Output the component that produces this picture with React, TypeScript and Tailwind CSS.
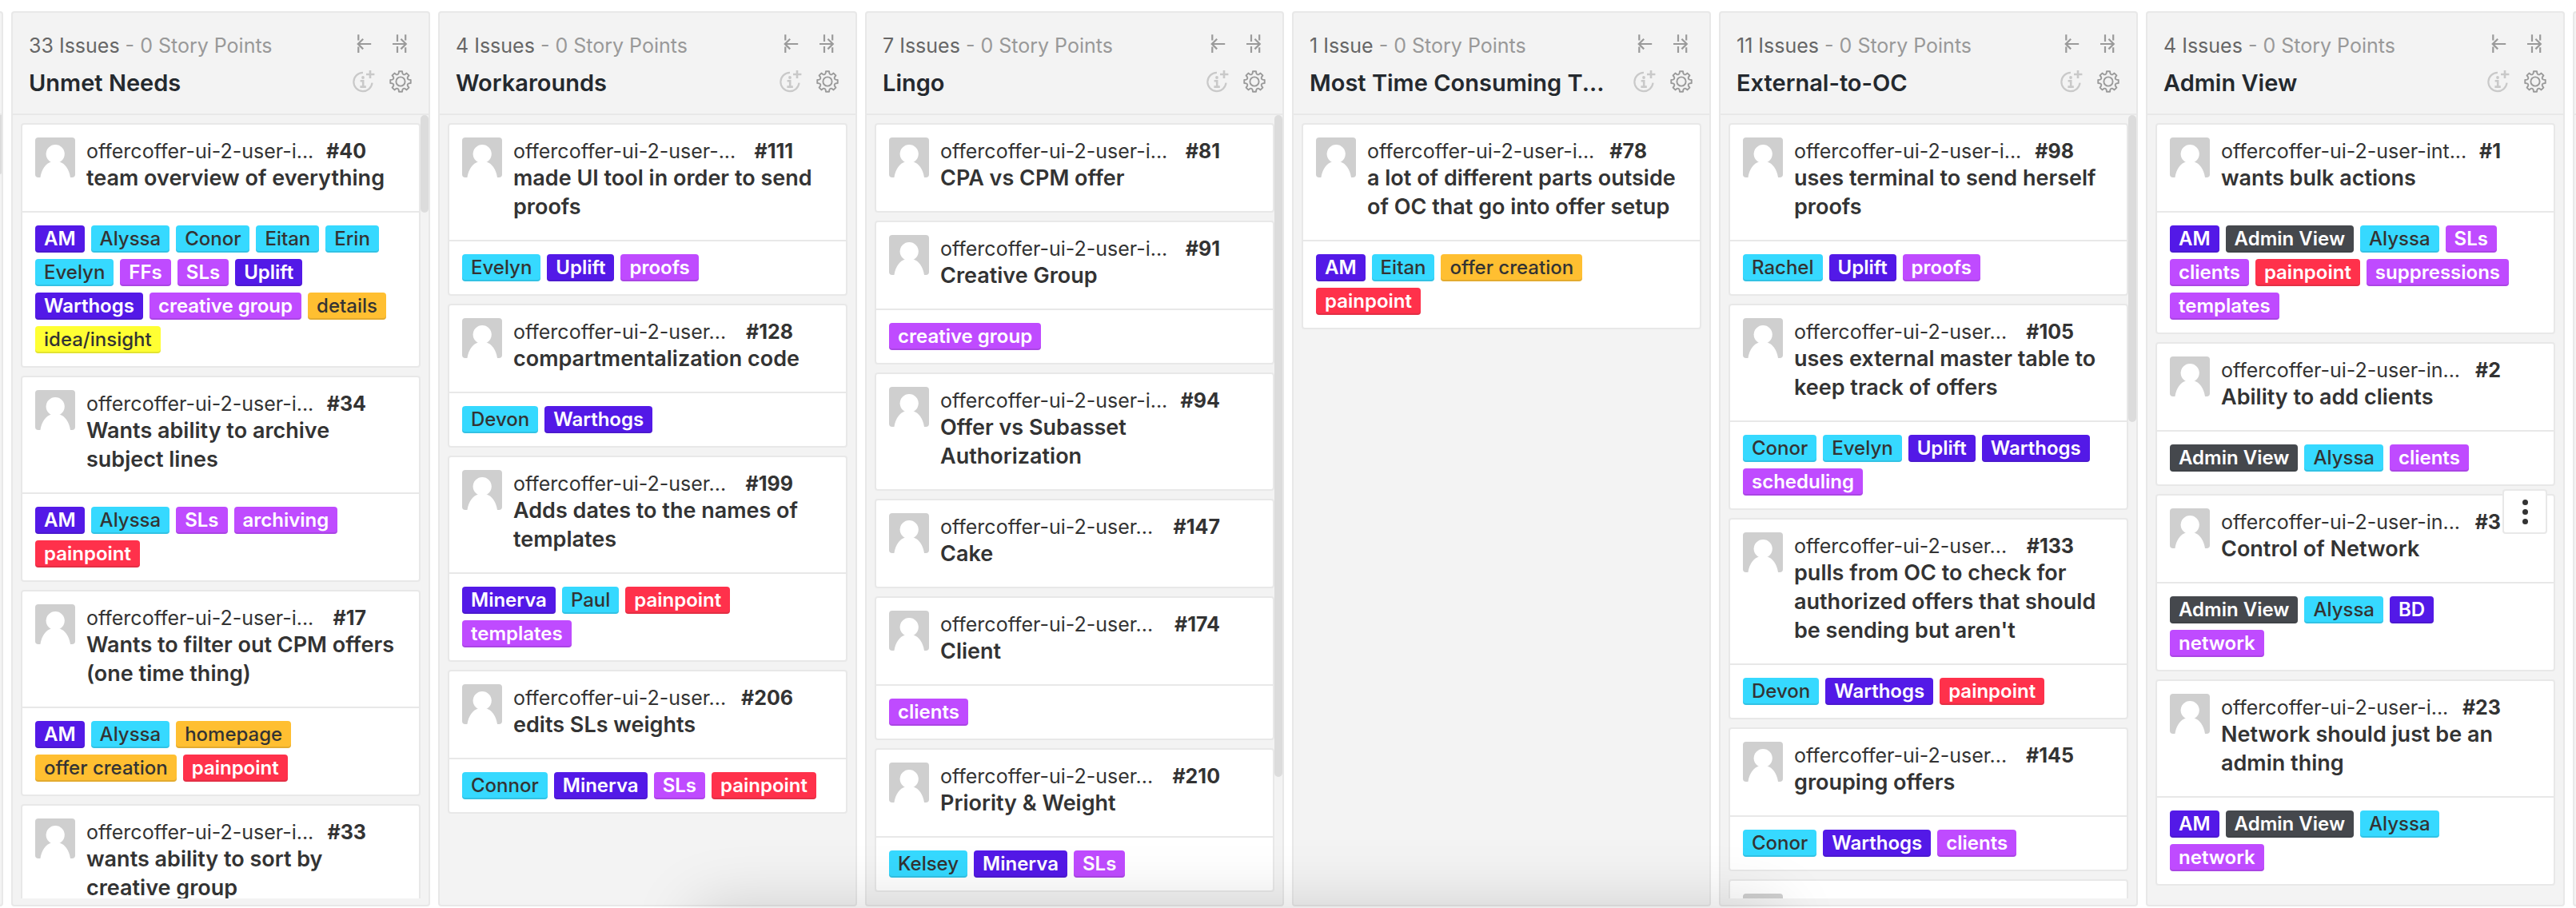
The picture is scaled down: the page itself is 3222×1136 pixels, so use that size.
type Tone = "indigo" | "cyan" | "violet" | "amber" | "yellow" | "red" | "slate";

const toneClass: Record<Tone, string> = {
  indigo: "bg-[#5319e7] font-semibold text-white",
  cyan: "bg-[#36d9ff] font-medium text-[#333]",
  violet: "bg-[#bf4bff] font-semibold text-white",
  amber: "bg-[#ffbf31] font-medium text-[#333]",
  yellow: "bg-[#ffff33] font-medium text-[#333]",
  red: "bg-[#ff314b] font-semibold text-white",
  slate: "bg-[#45484d] font-semibold text-white",
};

const labelTone: Record<string, Tone> = {
  AM: "indigo",
  BD: "indigo",
  Uplift: "indigo",
  Warthogs: "indigo",
  Minerva: "indigo",
  Alyssa: "cyan",
  Conor: "cyan",
  Connor: "cyan",
  Eitan: "cyan",
  Erin: "cyan",
  Evelyn: "cyan",
  Devon: "cyan",
  Paul: "cyan",
  Kelsey: "cyan",
  Rachel: "cyan",
  details: "amber",
  homepage: "amber",
  "offer creation": "amber",
  "idea/insight": "yellow",
  painpoint: "red",
  "Admin View": "slate",
};

interface Issue {
  repo: string;
  id: number;
  title: string;
  labels?: string[];
  menu?: boolean;
}

interface Pipeline {
  name: string;
  count: string;
  thumb?: string;
  issues: Issue[];
}

const pipelines: Pipeline[] = [
  {
    name: "Unmet Needs",
    count: "33 Issues",
    thumb: "h-[122px]",
    issues: [
      {
        repo: "offercoffer-ui-2-user-i...",
        id: 40,
        title: "team overview of everything",
        labels: ["AM", "Alyssa", "Conor", "Eitan", "Erin", "Evelyn", "FFs", "SLs", "Uplift", "Warthogs", "creative group", "details", "idea/insight"],
      },
      { repo: "offercoffer-ui-2-user-i...", id: 34, title: "Wants ability to archive subject lines", labels: ["AM", "Alyssa", "SLs", "archiving", "painpoint"] },
      { repo: "offercoffer-ui-2-user-i...", id: 17, title: "Wants to filter out CPM offers (one time thing)", labels: ["AM", "Alyssa", "homepage", "offer creation", "painpoint"] },
      { repo: "offercoffer-ui-2-user-i...", id: 33, title: "wants ability to sort by creative group" },
    ],
  },
  {
    name: "Workarounds",
    count: "4 Issues",
    issues: [
      { repo: "offercoffer-ui-2-user-...", id: 111, title: "made UI tool in order to send proofs", labels: ["Evelyn", "Uplift", "proofs"] },
      { repo: "offercoffer-ui-2-user...", id: 128, title: "compartmentalization code", labels: ["Devon", "Warthogs"] },
      { repo: "offercoffer-ui-2-user...", id: 199, title: "Adds dates to the names of templates", labels: ["Minerva", "Paul", "painpoint", "templates"] },
      { repo: "offercoffer-ui-2-user...", id: 206, title: "edits SLs weights", labels: ["Connor", "Minerva", "SLs", "painpoint"] },
    ],
  },
  {
    name: "Lingo",
    count: "7 Issues",
    thumb: "h-[828px]",
    issues: [
      { repo: "offercoffer-ui-2-user-i...", id: 81, title: "CPA vs CPM offer" },
      { repo: "offercoffer-ui-2-user-i...", id: 91, title: "Creative Group", labels: ["creative group"] },
      { repo: "offercoffer-ui-2-user-i...", id: 94, title: "Offer vs Subasset Authorization" },
      { repo: "offercoffer-ui-2-user...", id: 147, title: "Cake" },
      { repo: "offercoffer-ui-2-user...", id: 174, title: "Client", labels: ["clients"] },
      { repo: "offercoffer-ui-2-user...", id: 210, title: "Priority & Weight", labels: ["Kelsey", "Minerva", "SLs"] },
    ],
  },
  {
    name: "Most Time Consuming T...",
    count: "1 Issue",
    issues: [
      { repo: "offercoffer-ui-2-user-i...", id: 78, title: "a lot of different parts outside of OC that go into offer setup", labels: ["AM", "Eitan", "offer creation", "painpoint"] },
    ],
  },
  {
    name: "External-to-OC",
    count: "11 Issues",
    thumb: "h-[384px]",
    issues: [
      { repo: "offercoffer-ui-2-user-i...", id: 98, title: "uses terminal to send herself proofs", labels: ["Rachel", "Uplift", "proofs"] },
      { repo: "offercoffer-ui-2-user...", id: 105, title: "uses external master table to keep track of offers", labels: ["Conor", "Evelyn", "Uplift", "Warthogs", "scheduling"] },
      { repo: "offercoffer-ui-2-user...", id: 133, title: "pulls from OC to check for authorized offers that should be sending but aren't", labels: ["Devon", "Warthogs", "painpoint"] },
      { repo: "offercoffer-ui-2-user...", id: 145, title: "grouping offers", labels: ["Conor", "Warthogs", "clients"] },
      { repo: "", id: 0, title: "" },
    ],
  },
  {
    name: "Admin View",
    count: "4 Issues",
    issues: [
      { repo: "offercoffer-ui-2-user-int...", id: 1, title: "wants bulk actions", labels: ["AM", "Admin View", "Alyssa", "SLs", "clients", "painpoint", "suppressions", "templates"] },
      { repo: "offercoffer-ui-2-user-in...", id: 2, title: "Ability to add clients", labels: ["Admin View", "Alyssa", "clients"] },
      { repo: "offercoffer-ui-2-user-in...", id: 3, title: "Control of Network", labels: ["Admin View", "Alyssa", "BD", "network"], menu: true },
      { repo: "offercoffer-ui-2-user-i...", id: 23, title: "Network should just be an admin thing", labels: ["AM", "Admin View", "Alyssa", "network"] },
    ],
  },
];

function gearOutline(cx: number, cy: number): string {
  const at = (deg: number, r: number) => {
    const a = ((deg - 90) * Math.PI) / 180;
    return `${(cx + r * Math.cos(a)).toFixed(2)} ${(cy + r * Math.sin(a)).toFixed(2)}`;
  };
  let d = "";
  for (let i = 0; i < 8; i++) {
    const t = i * 45;
    d += `${i ? "L" : "M"}${at(t - 9, 12.9)}L${at(t + 9, 12.9)}L${at(t + 13, 10.6)}Q${at(t + 22.5, 8.6)} ${at(t + 32, 10.6)}`;
  }
  return d + "Z";
}

const GEAR = gearOutline(14, 14);

function CollapseLeftIcon() {
  return (
    <svg viewBox="0 0 28 28" className="size-7" fill="none" stroke="#9a9a9a" strokeWidth="2.2" aria-hidden="true">
      <path d="M7.3 3.2V10.6M7.3 18.6V26M7 15H23.2M13.2 8.8 6.8 15l6.4 6.4" />
    </svg>
  );
}

function CollapseRightIcon() {
  return (
    <svg viewBox="0 0 28 28" className="size-7" fill="none" stroke="#9a9a9a" strokeWidth="2.2" aria-hidden="true">
      <path d="M10 3.2V12M10 18V26M20.2 3.2V10.4M20.2 19.2V26M4 15H21M14.4 8.8 20.8 15l-6.4 6.4" />
    </svg>
  );
}

function InfoPlusIcon() {
  return (
    <svg viewBox="0 0 28 28" className="size-7" fill="none" stroke="#c9c9c9" strokeWidth="2.2" aria-hidden="true">
      <path d="M13 2.9A11.6 11.6 0 1 0 24.5 15.6" />
      <path d="M22 0v10M17 5h10.4" strokeWidth="2.6" />
      <path d="M9.6 13.2h3.6v7.4M9.4 20.6h7.4" strokeWidth="2.6" />
      <circle cx="13" cy="9" r="1.9" fill="#c9c9c9" stroke="none" />
    </svg>
  );
}

function GearIcon() {
  return (
    <svg viewBox="0 0 28 28" className="size-7" fill="none" stroke="#9a9a9a" strokeWidth="1.9" strokeLinejoin="round" aria-hidden="true">
      <path d={GEAR} />
      <circle cx="14" cy="14" r="5.6" />
    </svg>
  );
}

function Avatar() {
  return (
    <svg viewBox="0 0 50 50" className="size-[50px] shrink-0 rounded" aria-hidden="true">
      <rect width="50" height="50" fill="#cfcfcf" />
      <circle cx="25.2" cy="20.6" r="11.6" fill="#fff" />
      <path d="M6.4 50C8 39.500 13.500 32.500 20 30.600H30.400C37 32.500 42.400 39.500 44 50Z" fill="#fff" />
    </svg>
  );
}

function Label({ name }: { name: string }) {
  return (
    <li className={`mr-2 rounded px-[11px] text-[24px] leading-[34px] whitespace-nowrap shadow-[inset_0_-2px_0_rgba(27,31,35,0.12)] ${toneClass[labelTone[name] ?? "violet"]}`}>
      {name}
    </li>
  );
}

function IssueCard({ issue }: { issue: Issue }) {
  return (
    <li className="relative shrink-0 rounded border-2 border-[#e8e8e8] bg-white text-[#333]">
      <div className="flex gap-[14px] px-4 pt-4 pb-[23px]">
        <Avatar />
        <div className="min-w-0 flex-1 pt-0.5">
          {issue.repo && (
            <>
              <p className="flex justify-between pr-[50px] text-[25px] leading-[31px] whitespace-nowrap">
                <span>{issue.repo}</span>
                <span className="font-bold">#{issue.id}</span>
              </p>
              <h3 className="text-[27px] leading-9 font-semibold">{issue.title}</h3>
            </>
          )}
        </div>
      </div>
      {issue.labels && (
        <ul className="flex flex-wrap gap-y-2 border-t-2 border-[#e8e8e8] py-4 pr-5 pl-4">
          {issue.labels.map((l) => (
            <Label key={l} name={l} />
          ))}
        </ul>
      )}
      {issue.menu && (
        <button type="button" aria-label="Issue actions" className="absolute -top-2 right-2 flex size-14 flex-col items-center justify-center gap-[5px] rounded border-2 border-[#e8e8e8] bg-white">
          <span className="size-[7px] rounded-full bg-[#333]" />
          <span className="size-[7px] rounded-full bg-[#333]" />
          <span className="size-[7px] rounded-full bg-[#333]" />
        </button>
      )}
    </li>
  );
}

function Column({ pipeline }: { pipeline: Pipeline }) {
  return (
    <section className="flex min-w-0 flex-1 flex-col rounded border-2 border-[#e8e8e8] bg-[#f3f3f3]">
      <header className="flex justify-between border-b-2 border-[#e8e8e8] pt-6 pr-[21px] pb-[18px] pl-5">
        <div className="min-w-0">
          <p className="text-[25px] leading-[34px] whitespace-nowrap text-[#999]">
            <span className="text-[#666]">{pipeline.count}</span> - 0 Story Points
          </p>
          <h2 className="mt-[10px] text-[29px] leading-10 font-semibold whitespace-nowrap text-[#24292e]">{pipeline.name}</h2>
        </div>
        <div className="grid shrink-0 grid-cols-2 content-start gap-x-[18px] gap-y-5">
          <button type="button" aria-label="Collapse left" className="size-7"><CollapseLeftIcon /></button>
          <button type="button" aria-label="Collapse right" className="size-7"><CollapseRightIcon /></button>
          <button type="button" aria-label="Add description" className="size-7"><InfoPlusIcon /></button>
          <button type="button" aria-label="Settings" className="size-7"><GearIcon /></button>
        </div>
      </header>
      <div className="relative mb-2 min-h-0 flex-1 overflow-hidden">
        <ul className="flex flex-col gap-[10px] p-[10px]">
          {pipeline.issues.map((issue) => (
            <IssueCard key={issue.id} issue={issue} />
          ))}
        </ul>
        {pipeline.thumb && <div className={`absolute top-0 right-0 w-[10px] rounded-full bg-[#dcdcdc] ${pipeline.thumb}`} />}
      </div>
    </section>
  );
}

export default function App() {
  return (
    <main className="relative flex h-screen gap-[10px] overflow-hidden bg-white pt-[14px] pb-[2px] font-['Inter','Liberation_Sans',sans-serif]">
      <div className="flex w-1 shrink-0 flex-col rounded-r border-y-2 border-r-2 border-[#e8e8e8] bg-[#f3f3f3] pt-[126px]">
        <div className="h-0.5 bg-[#e8e8e8]" />
        <div className="h-[74px] rounded-br bg-[#dcdcdc]" />
      </div>
      {pipelines.map((p) => (
        <Column key={p.name} pipeline={p} />
      ))}
      <div className="w-1 shrink-0 rounded-l border-y-2 border-l-2 border-[#e8e8e8] bg-[#f3f3f3] pt-[126px]">
        <div className="h-0.5 bg-[#e8e8e8]" />
      </div>
      <div className="pointer-events-none absolute top-full right-[31%] left-[27%] h-20 rounded-xl shadow-[0_0_80px_rgba(0,0,0,0.17)]" />
    </main>
  );
}
